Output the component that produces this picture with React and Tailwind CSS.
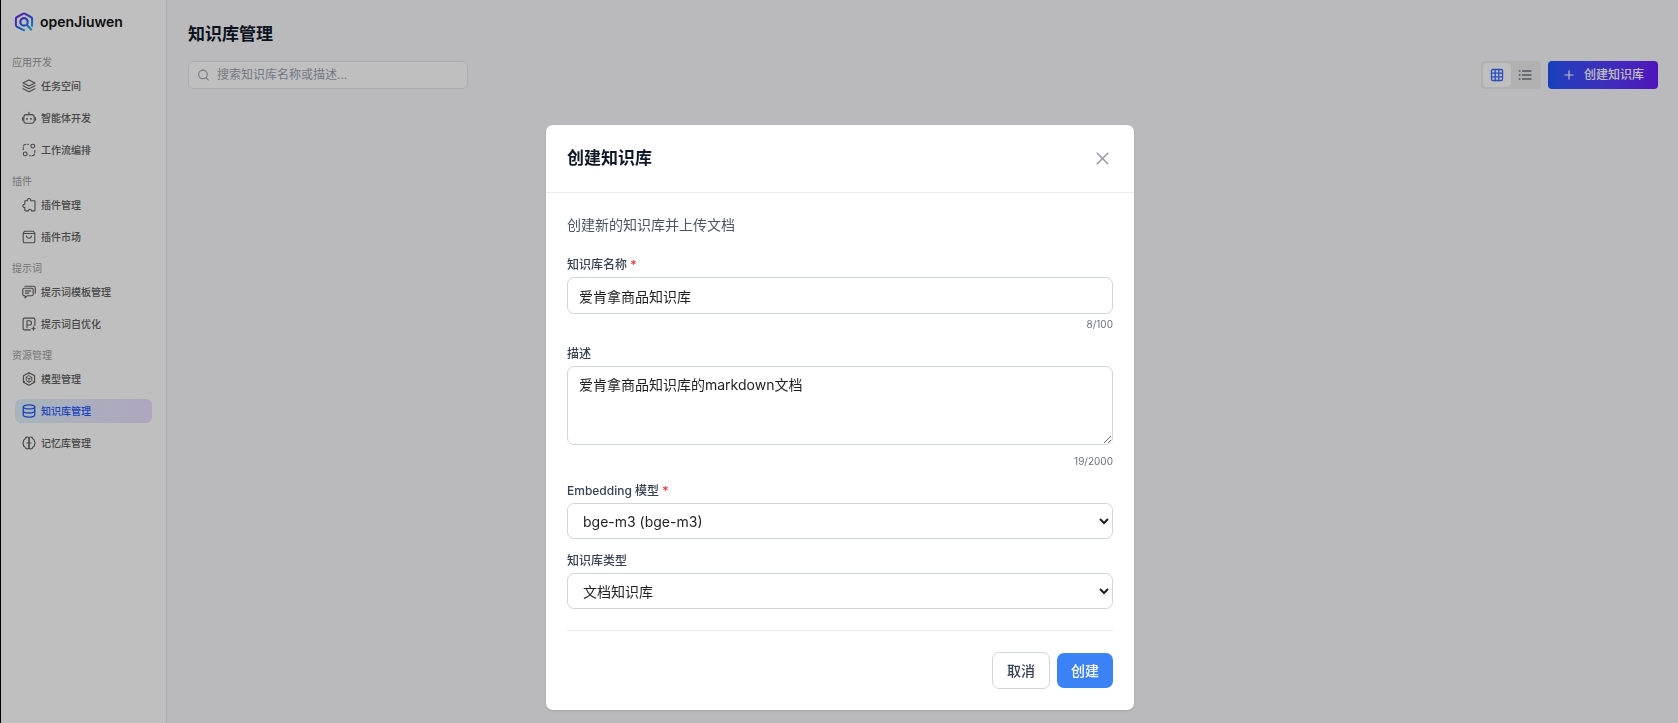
import React, { useState } from "react";
import { Plus, Search, X } from "lucide-react";

const Icon = ({ children, size = 14 }) => (
  <svg
    width={size}
    height={size}
    viewBox="0 0 14 14"
    fill="none"
    stroke="currentColor"
    strokeWidth="1.1"
    strokeLinecap="round"
    strokeLinejoin="round"
    className="shrink-0"
    aria-hidden="true"
  >
    {children}
  </svg>
);

const LayersIcon = () => (
  <Icon>
    <path d="M7 .9 13 3.9 7 6.9 1 3.9Z" />
    <path d="M1 6.7 7 9.8l6-3.1" />
    <path d="M1 9.7 7 12.8l6-3.1" />
  </Icon>
);

const RobotIcon = () => (
  <Icon>
    <rect x="1.8" y="3.6" width="10.4" height="8.6" rx="2.4" />
    <path d="M7 3.4V1.2M.6 6.6v2.6M13.4 6.6v2.6" />
    <path d="M5 7.4v.8M9 7.4v.8" strokeWidth="1.5" />
  </Icon>
);

const FlowIcon = () => (
  <Icon>
    <circle cx="10.8" cy="3.1" r="1.9" />
    <circle cx="3.2" cy="10.9" r="1.9" />
    <path d="M1.2 6.6V4.6M1.4 3C1.8 1.8 2.8 1.2 4 1.2M5.6 1.2h1" />
    <path d="M12.8 7.4v2M12.6 11c-.4 1.2-1.4 1.8-2.6 1.8M8.4 12.8h-1" />
  </Icon>
);

const PuzzleIcon = () => (
  <Icon>
    <path d="M3.4 2.8h2.1a1.7 1.7 0 1 1 3.2 0h3.7c.3 0 .6.3.6.6v8.9c0 .3-.3.6-.6.6H9.6c0-1-.7-1.6-1.6-1.6s-1.6.6-1.6 1.6h-3c-.3 0-.6-.3-.6-.6V9.4A1.7 1.7 0 0 1 .8 7.8c0-.9.8-1.6 2-1.6V3.4c0-.3.3-.6.6-.6Z" />
  </Icon>
);

const BagIcon = () => (
  <Icon>
    <path d="M2.6 1.2h8.8l1.4 2v8.2c0 .8-.6 1.4-1.4 1.4H2.6c-.8 0-1.4-.6-1.4-1.4V3.2Z" />
    <path d="M1.4 3.5h11.2M4.5 6c.2 1.4 1.2 2.3 2.5 2.3S9.3 7.4 9.5 6" />
  </Icon>
);

const ChatIcon = () => (
  <Icon>
    <path d="M2.2 3.3h7.6c.8 0 1.4.6 1.4 1.4v4.6c0 .8-.6 1.4-1.4 1.4H5.4l-2.3 2.1v-2.1h-.9c-.8 0-1.4-.6-1.4-1.4V4.7c0-.8.6-1.4 1.4-1.4Z" />
    <path d="M2.9 1.2h8.7c1 0 1.7.7 1.7 1.7v5.3M3.3 5.9h5.4M3.3 8.1h3.5" />
  </Icon>
);

const PromptIcon = () => (
  <Icon>
    <path d="M8.4 12.9H2.5c-.8 0-1.4-.6-1.4-1.4v-9c0-.8.6-1.4 1.4-1.4h9c.8 0 1.4.6 1.4 1.4v5.9" />
    <path d="M5 10.7V3.8h2.4a2.1 2.1 0 0 1 0 4.200H5" />
    <path
      d="m11.5 9.2.6 1.7 1.7.6-1.7.6-.6 1.7-.6-1.700-1.700-.6 1.700-.6Z"
      fill="currentColor"
      strokeWidth=".4"
    />
  </Icon>
);

const ModelIcon = () => (
  <Icon>
    <path d="M7 .7 12.6 3.8v6.4L7 13.3 1.4 10.2V3.8Z" />
    <path d="M7 3.8 9.8 5.4v3.3L7 10.3 4.2 8.7V5.4Z" strokeWidth=".9" />
    <path
      d="M4.2 5.4 7 7l2.8-1.6M7 7v3.3M7 .7v1.5M1.4 10.2l1.5-.8M12.6 10.2l-1.5-.8"
      strokeWidth=".9"
    />
  </Icon>
);

const DatabaseIcon = () => (
  <Icon>
    <g strokeWidth="1.3">
      <ellipse cx="7" cy="2.9" rx="5.7" ry="2" />
      <path d="M1.3 2.9v8.2c0 1.1 2.5 2 5.7 2s5.7-.9 5.7-2V2.9" />
      <path d="M1.3 7c0 1.1 2.5 2 5.7 2s5.7-.9 5.7-2" />
    </g>
  </Icon>
);

const BrainIcon = () => (
  <Icon>
    <path d="M7 2.3C6.6 1.3 5.7.9 4.8 1.1c-1 .2-1.7 1-1.7 2-1.2.4-1.7 1.400-1.500 2.400-.8 1-.8 2.200 0 3.100-.3 1.200.3 2.100 1.500 2.400.1 1.100.9 1.900 1.900 1.900.9 0 1.600-.4 2-1.200Z" />
    <path d="M7 2.3c.4-1 1.300-1.400 2.200-1.200 1 .2 1.700 1 1.700 2 1.200.4 1.700 1.400 1.500 2.400.8 1 .8 2.200 0 3.100.3 1.200-.3 2.100-1.500 2.400-.1 1.100-.9 1.900-1.900 1.900-.9 0-1.600-.4-2-1.200Z" />
    <path d="M5 7h4" />
  </Icon>
);

const GridIcon = () => (
  <Icon>
    <rect x="1.500" y="1.500" width="11" height="11" rx="1.200" strokeWidth="1.300" />
    <path d="M5.200 1.500v11M8.800 1.500v11M1.500 5.200h11M1.500 8.800h11" strokeWidth="1.300" />
  </Icon>
);

const ListIcon = () => (
  <Icon>
    <path d="M4.500 3h8.500M4.500 7h8.500M4.500 11h8.500M1.200 3h.8M1.200 7h.8M1.200 11h.8" strokeWidth="1.300" />
  </Icon>
);

const Logo = () => (
  <svg width="20" height="20" viewBox="0 0 20 20" fill="none" aria-hidden="true">
    <defs>
      <linearGradient id="logo" x1="4" y1="1" x2="17" y2="19" gradientUnits="userSpaceOnUse">
        <stop stopColor="#6a2ce8" />
        <stop offset=".5" stopColor="#3556f5" />
        <stop offset="1" stopColor="#12c8ee" />
      </linearGradient>
    </defs>
    <g stroke="url(#logo)" strokeWidth="2" strokeLinejoin="round">
      <path d="M10.8 18.6 3.100 14.900c-.8-.4-1.200-1-1.200-1.800V6.800c0-.8.4-1.400 1.200-1.800l5.700-3.100c.8-.4 1.600-.4 2.400 0L16.900 5c.8.4 1.200 1 1.200 1.800v6.300c0 .8-.2 1.300-.6 1.700" />
      <circle cx="10" cy="9.900" r="3.700" strokeWidth="2.200" />
      <path d="m12.600 12.600 5 5.600" strokeWidth="2.200" />
    </g>
  </svg>
);

const menu = [
  {
    title: "应用开发",
    items: [
      { name: "任务空间", icon: LayersIcon },
      { name: "智能体开发", icon: RobotIcon },
      { name: "工作流编排", icon: FlowIcon },
    ],
  },
  {
    title: "插件",
    items: [
      { name: "插件管理", icon: PuzzleIcon },
      { name: "插件市场", icon: BagIcon },
    ],
  },
  {
    title: "提示词",
    items: [
      { name: "提示词模板管理", icon: ChatIcon },
      { name: "提示词自优化", icon: PromptIcon },
    ],
  },
  {
    title: "资源管理",
    items: [
      { name: "模型管理", icon: ModelIcon },
      { name: "知识库管理", icon: DatabaseIcon, active: true },
      { name: "记忆库管理", icon: BrainIcon },
    ],
  },
];

const Sidebar = () => (
  <aside className="w-[167px] shrink-0 bg-white border-l border-l-black border-r border-r-gray-200">
    <div className="flex items-center gap-1.5 h-[43px] pl-[13px]">
      <Logo />
      <span className="text-sm font-semibold text-[#111111]">openJiuwen</span>
    </div>
    <nav className="flex flex-col gap-[11px] pt-[11px] pl-[11px] pr-3.5">
      {menu.map(({ title, items }) => (
        <div key={title}>
          <h2 className="text-[10px] leading-4 text-[#9a9a9a]">{title}</h2>
          <ul className="flex flex-col gap-2 mt-1 pl-[3px]">
            {items.map(({ name, icon: ItemIcon, active }) => (
              <li key={name}>
                <a
                  href="#"
                  className={
                    active
                      ? "flex items-center gap-[5px] h-6 pl-[7px] rounded-md text-[10px] font-medium text-[#2459ff] bg-linear-to-r from-[#dff2fa] to-[#eaddff]"
                      : "flex items-center gap-[5px] h-6 pl-[7px] rounded-md text-[10px] font-medium text-[#606060]"
                  }
                >
                  <ItemIcon />
                  {name}
                </a>
              </li>
            ))}
          </ul>
        </div>
      ))}
    </nav>
  </aside>
);

const fieldClasses =
  "block w-full rounded-[7px] border border-gray-300 bg-white text-sm text-[#1f1f1f] outline-none";

const Field = ({ id, label, required, counter, children }) => (
  <div>
    <label htmlFor={id} className="block mb-1 text-xs font-medium text-gray-700">
      {label}
      {required && <span className="text-red-500"> *</span>}
    </label>
    {children}
    {counter}
  </div>
);

const CreateModal = () => {
  const [name, setName] = useState("爱肯拿商品知识库");
  const [description, setDescription] = useState("爱肯拿商品知识库的markdown文档");

  return (
    <div className="fixed inset-0 flex items-start justify-center pt-[125px] pl-0.5 bg-black/25">
      <div
        role="dialog"
        aria-labelledby="modal-title"
        className="w-full max-w-[588px] rounded-[7px] bg-white shadow-sm"
      >
        <div className="flex items-center justify-between p-[21px] border-b border-[#ececf0]">
          <h2 id="modal-title" className="text-[17px] leading-[25px] font-bold text-gray-900">
            创建知识库
          </h2>
          <button type="button" aria-label="关闭" className="text-gray-400">
            <X size={21} />
          </button>
        </div>
        <form className="p-[21px]" onSubmit={(e) => e.preventDefault()}>
          <p className="mb-[21px] text-sm leading-[22px] text-gray-600">创建新的知识库并上传文档</p>
          <div className="flex flex-col gap-3.5">
            <Field
              id="name"
              label="知识库名称"
              required
              counter={
                <p className="mt-0.5 text-[10px] leading-4 text-right text-gray-500">
                  {name.length}/100
                </p>
              }
            >
              <input
                id="name"
                type="text"
                value={name}
                onChange={({ target }) => setName(target.value)}
                className={`${fieldClasses} h-[37px] px-[11px]`}
              />
            </Field>
            <Field
              id="description"
              label="描述"
              counter={
                <p className="mt-2 text-[10px] leading-4 text-right text-gray-500">
                  {description.length}/2000
                </p>
              }
            >
              <textarea
                id="description"
                value={description}
                onChange={({ target }) => setDescription(target.value)}
                className={`${fieldClasses} h-[79px] px-[11px] py-2 resize-y`}
              />
            </Field>
            <Field id="embedding" label="Embedding 模型" required>
              <select id="embedding" className={`${fieldClasses} h-9 px-[11px]`}>
                <option>bge-m3 (bge-m3)</option>
              </select>
            </Field>
            <Field id="type" label="知识库类型">
              <select id="type" className={`${fieldClasses} h-9 px-[11px]`}>
                <option>文档知识库</option>
              </select>
            </Field>
          </div>
          <div className="flex items-center justify-end gap-[7px] mt-[21px] pt-[21px] border-t border-[#ececf0]">
            <button
              type="button"
              className="h-[37px] px-3.5 rounded-[7px] border border-gray-300 text-sm font-medium text-gray-700"
            >
              取消
            </button>
            <button
              type="submit"
              className="h-[35px] px-3.5 rounded-[7px] bg-[#3b82f6] text-sm font-medium text-white"
            >
              创建
            </button>
          </div>
        </form>
      </div>
    </div>
  );
};

const App = () => {
  return (
    <div className="flex min-h-screen bg-[#f8f9fb] font-['Inter','Noto_Sans_CJK_SC',sans-serif]">
      <Sidebar />
      <main className="flex-1 pl-[21px] pr-5 pt-[22px]">
        <h1 className="text-[17px] leading-[25px] font-bold text-gray-900">知识库管理</h1>
        <div className="flex items-center justify-between mt-3.5">
          <label className="flex items-center gap-[7px] w-[280px] h-7 px-2 rounded-md border border-gray-200 bg-white text-gray-400">
            <Search size={14} />
            <input
              type="text"
              aria-label="搜索知识库"
              placeholder="搜索知识库名称或描述..."
              className="w-full text-xs outline-none placeholder:text-gray-400"
            />
          </label>
          <div className="flex items-center gap-[7px]">
            <div className="flex p-0.5 rounded bg-[#ececee]">
              <button
                type="button"
                aria-label="网格视图"
                className="flex items-center justify-center w-7 h-6 rounded bg-white text-[#3b66ff]"
              >
                <GridIcon />
              </button>
              <button
                type="button"
                aria-label="列表视图"
                className="flex items-center justify-center w-7 h-6 rounded text-gray-500"
              >
                <ListIcon />
              </button>
            </div>
            <button
              type="button"
              className="flex items-center gap-2 h-7 px-3.5 rounded bg-linear-to-r from-[#1c55fb] to-[#6a1afb] text-xs font-medium text-white"
            >
              <Plus size={14} />
              创建知识库
            </button>
          </div>
        </div>
      </main>
      <CreateModal />
    </div>
  );
};

export default App;
